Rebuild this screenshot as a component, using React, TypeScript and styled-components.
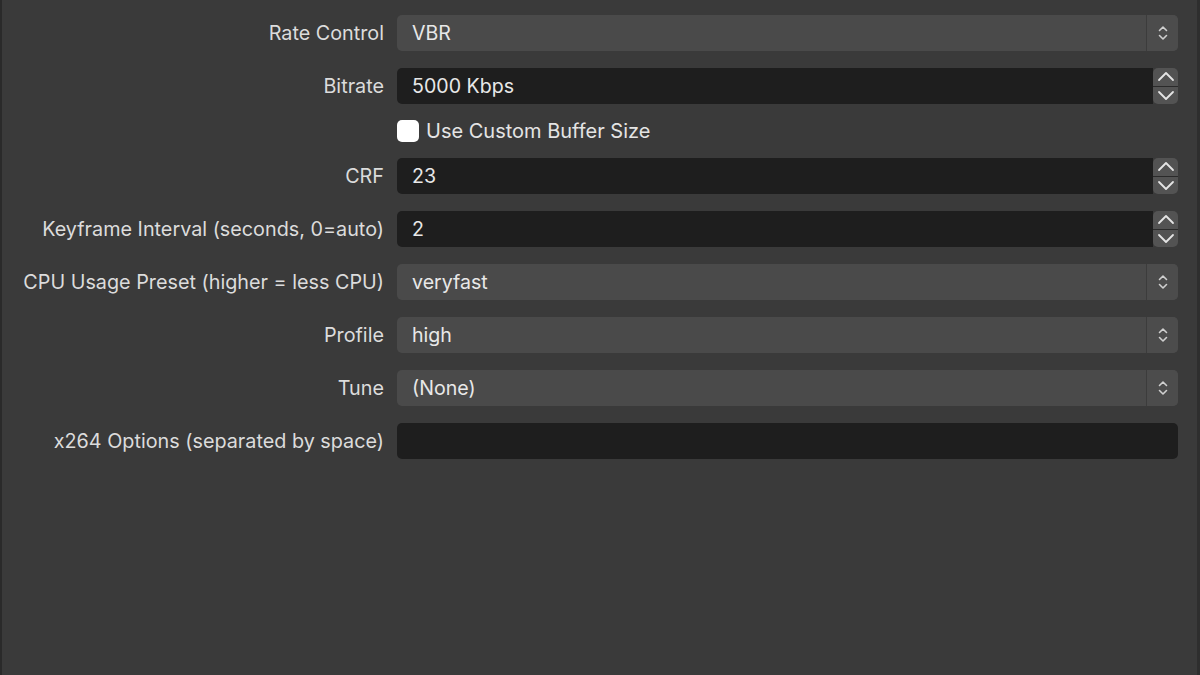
import React from "react";
import styled, { createGlobalStyle } from "styled-components";

const Global = createGlobalStyle`
  html, body { margin: 0; padding: 0; background: #3a3a3a; }
  body { font-family: Inter, "Liberation Sans", sans-serif; }
`;

const Page = styled.div`
  width: 1200px;
  height: 675px;
  box-sizing: border-box;
  background: #3a3a3a;
  border-left: 2px solid #2a2a2a;
  border-right: 3px solid #2e2e2e;
  padding-top: 15px;
`;

const Form = styled.div`
  display: grid;
  grid-template-columns: 382px 781px;
  column-gap: 13px;
  row-gap: 17px;
  align-items: center;
`;

const Label = styled.div`
  text-align: right;
  color: #dcdcdc;
  font-size: 19.8px;
  line-height: 36px;
  white-space: nowrap;
`;

const Field = styled.div<{ $dark?: boolean }>`
  height: 36px;
  display: flex;
  align-items: stretch;
  border-radius: 5px;
  background: ${(p) => (p.$dark ? "#1e1e1e" : "#4a4a4a")};
  overflow: hidden;
`;

const Value = styled.div`
  flex: 1;
  color: #e8e8e8;
  font-size: 19.6px;
  line-height: 36px;
  padding-left: 15px;
`;

const SelectArrows = styled.div`
  width: 31px;
  border-left: 1px solid #3c3c3c;
  background: #4c4c4c;
  display: flex;
  align-items: center;
  justify-content: center;
`;

const SpinWrap = styled.div`
  height: 36px;
  display: flex;
`;

const SpinInput = styled.div`
  flex: 1;
  background: #1e1e1e;
  border-radius: 5px 0 0 5px;
  display: flex;
`;

const SpinButtons = styled.div`
  width: 25px;
  display: flex;
  flex-direction: column;
  border-radius: 5px;
  overflow: hidden;
  background: #535353;
`;

const SpinBtn = styled.div<{ $top?: boolean }>`
  flex: 1;
  display: flex;
  align-items: center;
  justify-content: center;
  border-bottom: ${(p) => (p.$top ? "1px solid #2a2a2a" : "none")};
`;

const CheckRow = styled.label`
  display: flex;
  align-items: center;
  gap: 7px;
  height: 20px;
  color: #e4e4e4;
  font-size: 20px;
`;

const Box = styled.span`
  width: 22px;
  height: 22px;
  border-radius: 5px;
  background: #ffffff;
  display: inline-block;
`;

const Empty = styled.div``;

const UpDown = () => (
  <svg width="12" height="18" viewBox="0 0 12 18" fill="none" stroke="#cfcfcf" strokeWidth="1.6" strokeLinecap="round" strokeLinejoin="round">
    <path d="M2.5 6.5 L6 3 L9.5 6.5" />
    <path d="M2.5 11.5 L6 15 L9.5 11.5" />
  </svg>
);

const Chevron = ({ up }: { up?: boolean }) => (
  <svg width="18" height="11" viewBox="0 0 18 11" fill="none" stroke="#e4e4e4" strokeWidth="1.8" strokeLinecap="round" strokeLinejoin="round">
    {up ? <path d="M2 9 L9 2 L16 9" /> : <path d="M2 2 L9 9 L16 2" />}
  </svg>
);

const Select = ({ value }: { value: string }) => (
  <Field>
    <Value>{value}</Value>
    <SelectArrows>
      <UpDown />
    </SelectArrows>
  </Field>
);

const Spin = ({ value }: { value: string }) => (
  <SpinWrap>
    <SpinInput>
      <Value>{value}</Value>
    </SpinInput>
    <SpinButtons>
      <SpinBtn $top>
        <Chevron up />
      </SpinBtn>
      <SpinBtn>
        <Chevron />
      </SpinBtn>
    </SpinButtons>
  </SpinWrap>
);

export default function App() {
  return (
    <>
      <Global />
      <Page>
        <Form>
          <Label>Rate Control</Label>
          <Select value="VBR" />

          <Label>Bitrate</Label>
          <Spin value="5000 Kbps" />

          <Empty />
          <CheckRow>
            <Box />
            Use Custom Buffer Size
          </CheckRow>

          <Label>CRF</Label>
          <Spin value="23" />

          <Label>Keyframe Interval (seconds, 0=auto)</Label>
          <Spin value="2" />

          <Label>CPU Usage Preset (higher = less CPU)</Label>
          <Select value="veryfast" />

          <Label>Profile</Label>
          <Select value="high" />

          <Label>Tune</Label>
          <Select value="(None)" />

          <Label>x264 Options (separated by space)</Label>
          <Field $dark />
        </Form>
      </Page>
    </>
  );
}
